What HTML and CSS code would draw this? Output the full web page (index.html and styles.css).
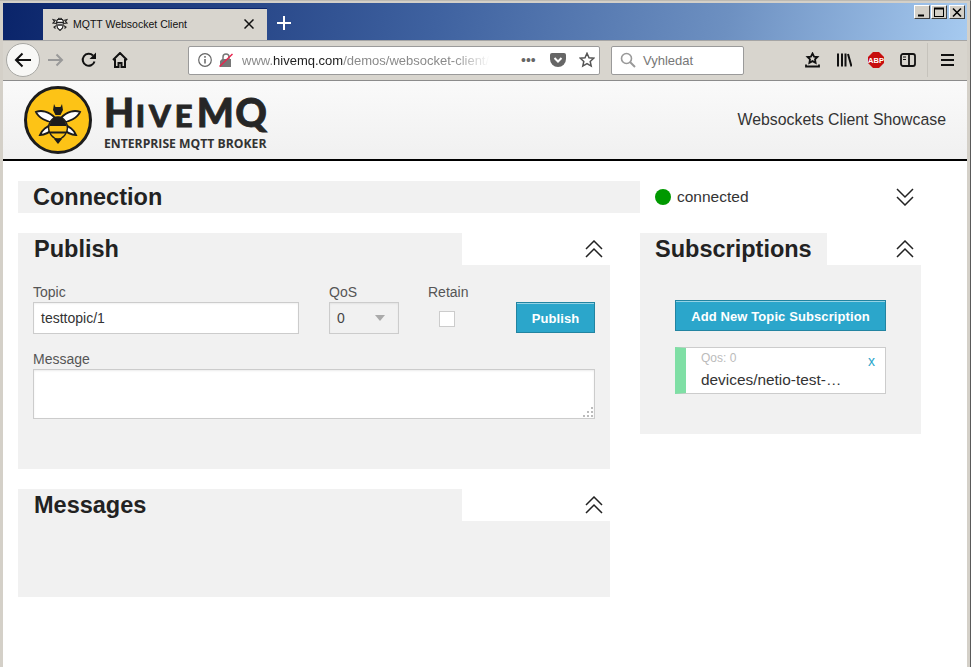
FILE: index.html
```html
<!DOCTYPE html>
<html lang="en">
<head>
<meta charset="utf-8">
<title>MQTT Websocket Client</title>
<link rel="stylesheet" href="styles.css">
</head>
<body>
<div class="window">
  <div class="titlebar">
    <div class="tab">
      <svg class="favicon" width="16" height="14" viewBox="0 0 16 14"><g fill="none" stroke="#222" stroke-width="1.100"><path d="M5.500 2.500h5l1 2.500-1 6-2.500 2.500L5.500 11l-1-6z" fill="#fff"/><path d="M5 5.500h6M5.500 8h5M6.500 1l1 1.500M9.500 1l-1 1.500" stroke-width="1.400"/><path d="M4.500 3.500L1 2.500l1.500 2L1 6l3.500.5M11.500 3.500l3.500-1-1.500 2L15 6l-3.500.5M4.500 8.500L2 10l1.500 1.500M11.500 8.500L14 10l-1.500 1.500"/></g></svg>
      <span class="tab-title">MQTT Websocket Client</span>
      <svg class="tab-close" width="10" height="10" viewBox="0 0 10 10"><path d="M.5.5l9 9M9.5.5l-9 9" stroke="#111" stroke-width="1.500"/></svg>
    </div>
    <svg class="newtab" width="14" height="14" viewBox="0 0 14 14"><path d="M7 0v14M0 7h14" stroke="#fff" stroke-width="2"/></svg>
    <div class="winbtns">
      <div class="winbtn"><svg width="16" height="13" viewBox="0 0 16 13"><path d="M4 9.500h6" stroke="#000" stroke-width="2"/></svg></div>
      <div class="winbtn"><svg width="16" height="13" viewBox="0 0 16 13"><rect x="3.500" y="2.500" width="9" height="8" fill="none" stroke="#000"/><path d="M3 2.500h10" stroke="#000" stroke-width="2"/></svg></div>
      <div class="winbtn close"><svg width="16" height="13" viewBox="0 0 16 13"><path d="M4 2.500l8 8M12 2.500l-8 8" stroke="#000" stroke-width="1.600"/></svg></div>
    </div>
  </div>
  <div class="toolbar">
    <div class="backbtn"><svg width="18" height="16" viewBox="0 0 18 16"><path d="M17 8H2M8.500 1.500L2 8l6.500 6.500" fill="none" stroke="#111" stroke-width="2"/></svg></div>
    <svg class="ic-forward" width="16" height="14" viewBox="0 0 16 14"><path d="M0 7h14M8.500 1.500L14 7l-5.500 5.500" fill="none" stroke="#999" stroke-width="2"/></svg>
    <svg class="ic-reload" width="16" height="16" viewBox="0 0 16 16"><path d="M13.500 9.500A6 6 0 1 1 12 3.500" fill="none" stroke="#111" stroke-width="2"/><path d="M15 .5v6.500H8.500z" fill="#111"/></svg>
    <svg class="ic-home" width="16" height="16" viewBox="0 0 16 16"><path d="M1 8l7-7 7 7M3 7v8h3.500v-4h3v4H13V7" fill="none" stroke="#111" stroke-width="2"/></svg>
    <div class="urlbar">
      <svg class="ic-info" width="14" height="14" viewBox="0 0 14 14"><circle cx="7" cy="7" r="6.300" fill="none" stroke="#666" stroke-width="1.200"/><path d="M7 6v4.500M7 3v1.800" stroke="#666" stroke-width="1.500"/></svg>
      <svg class="ic-lock" width="14" height="14" viewBox="0 0 14 14"><path d="M3 6h9v8H1V8z" fill="#777"/><path d="M4 6V4a3 3 0 0 1 6 0v2" fill="none" stroke="#777" stroke-width="1.500"/><path d="M.5 13.500L13.500 1" stroke="#e8264f" stroke-width="1.500"/></svg>
      <span class="url"><span class="url-dim">www.</span>hivemq.com<span class="url-dim">/demos/websocket-client/</span></span>
      <span class="dots">•••</span>
      <svg class="ic-pocket" width="16" height="14" viewBox="0 0 16 14"><path d="M0 2a2 2 0 0 1 2-2h12a2 2 0 0 1 2 2v4a8 8 0 0 1-16 0z" fill="#666"/><path d="M4.500 5L8 8.500 11.500 5" fill="none" stroke="#fff" stroke-width="2"/></svg>
      <svg class="ic-star" width="16" height="16" viewBox="0 0 16 16"><path d="M8 1.300l2 4.400 4.700.5-3.500 3.200 1 4.700L8 11.700l-4.200 2.400 1-4.700L1.300 6.200 6 5.700z" fill="none" stroke="#555" stroke-width="1.500"/></svg>
    </div>
    <div class="searchbar">
      <svg width="16" height="16" viewBox="0 0 16 16"><circle cx="6.500" cy="6.500" r="5" fill="none" stroke="#999" stroke-width="1.600"/><path d="M10 10l5 5" stroke="#999" stroke-width="2"/></svg>
      <span class="search-text">Vyhledat</span>
    </div>
    <svg class="ic-saved" width="15" height="16" viewBox="0 0 15 16"><path d="M7.500 1.500l1.600 3.100 3.400.4-2.500 2.400.6 3.400-3.100-1.700-3.100 1.700.6-3.400L2.500 5l3.400-.4z" fill="none" stroke="#111" stroke-width="1.800"/><path d="M1 12.500v2h13v-2" fill="none" stroke="#111" stroke-width="1.800"/></svg>
    <svg class="ic-lib" width="15" height="14" viewBox="0 0 15 14"><path d="M1 .5v13M5 .5v13M8.500.5v13M11 1l3.500 12.500" stroke="#111" stroke-width="2" fill="none"/></svg>
    <svg class="ic-abp" width="16" height="16" viewBox="0 0 16 16"><path d="M5 0h6l5 5v6l-5 5H5l-5-5V5z" fill="#c70d0d"/><text x="8" y="11" class="abp-text" text-anchor="middle">ABP</text></svg>
    <svg class="ic-side" width="16" height="14" viewBox="0 0 16 14"><rect x="1" y="1" width="14" height="12" rx="2" fill="none" stroke="#111" stroke-width="1.800"/><path d="M9 1v12" stroke="#111" stroke-width="1.800"/><path d="M3 4h3M3 6.500h3" stroke="#111"/></svg>
    <div class="tb-sep"></div>
    <svg class="ic-menu" width="13" height="12" viewBox="0 0 13 12"><path d="M0 1h13M0 6h13M0 11h13" stroke="#111" stroke-width="2"/></svg>
  </div>
  <div class="page">
    <header class="site-header">
      <div class="brand">
        <svg class="bee" width="70" height="70" viewBox="0 0 70 70">
          <circle cx="35" cy="35" r="32.500" fill="#fdc316" stroke="#1c1c1c" stroke-width="3"/>
          <path d="M32 33C26 26 18 25 13 27c2 5 11 11 19 10zM38 33c6-7 14-8 19-6-2 5-11 11-19 10zM29 40c-5 1-10 5-12 10 5 0 11-4 14-7zM41 40c5 1 10 5 12 10-5 0-11-4-14-7z" fill="#fff" stroke="#1c1c1c" stroke-width="2"/>
          <path d="M31 19l1.500 3h5L39 19l1 6-2.500 5h-5L30 25z" fill="#1c1c1c"/>
          <path d="M35 32c6 0 9.500 6 9.500 11S40 54 35 54s-9.500-6-9.500-11S29 32 35 32z" fill="#fdc316" stroke="#1c1c1c" stroke-width="1.500"/>
          <path d="M35 32c4 0 7.500 3 8.500 9h-17c1-6 4.500-9 8.500-9zM27 46.500h16v2H27z" fill="#1c1c1c"/>
          <path d="M31 54h8l-4 5z" fill="#1c1c1c"/>
        </svg>
        <div class="brand-text">
          <div class="brand-name"><span class="cap">H</span>IVE<span class="cap">MQ</span></div>
          <div class="brand-sub">ENTERPRISE MQTT BROKER</div>
        </div>
      </div>
      <div class="showcase">Websockets Client Showcase</div>
    </header>
    <main class="content">
      <div class="row-top">
        <div class="connection-bar"><h2>Connection</h2></div>
        <div class="status">
          <span class="dot"></span>
          <span class="status-text">connected</span>
          <svg class="chevron" width="18" height="18" viewBox="0 0 18 18"><path d="M1 1l8 8 8-8M1 9l8 8 8-8" fill="none" stroke="#222" stroke-width="1.500"/></svg>
        </div>
      </div>
      <div class="columns">
        <div class="col-left">
          <section class="section">
            <div class="sec-head">
              <div class="sec-tab wide"><h2>Publish</h2></div>
              <svg class="chevron" width="18" height="18" viewBox="0 0 18 18"><path d="M1 9l8-8 8 8M1 17l8-8 8 8" fill="none" stroke="#222" stroke-width="1.500"/></svg>
            </div>
            <div class="panel publish-panel">
              <div class="form-row">
                <div class="field f-topic">
                  <label class="lbl">Topic</label>
                  <div class="input">testtopic/1</div>
                </div>
                <div class="field f-qos">
                  <label class="lbl">QoS</label>
                  <div class="input select"><span>0</span><span class="caret"></span></div>
                </div>
                <div class="field f-retain">
                  <label class="lbl">Retain</label>
                  <div class="check"></div>
                </div>
                <button class="btn btn-publish">Publish</button>
              </div>
              <label class="lbl lbl-msg">Message</label>
              <div class="textarea">
                <svg class="grip" width="12" height="12" viewBox="0 0 12 12"><path d="M9 1h2v2H9zM5 5h2v2H5zM9 5h2v2H9zM1 9h2v2H1zM5 9h2v2H5zM9 9h2v2H9z" fill="#bbb"/></svg>
              </div>
            </div>
          </section>
          <section class="section messages">
            <div class="sec-head">
              <div class="sec-tab wide"><h2>Messages</h2></div>
              <svg class="chevron" width="18" height="18" viewBox="0 0 18 18"><path d="M1 9l8-8 8 8M1 17l8-8 8 8" fill="none" stroke="#222" stroke-width="1.500"/></svg>
            </div>
            <div class="panel messages-panel"></div>
          </section>
        </div>
        <div class="col-right">
          <section class="section">
            <div class="sec-head">
              <div class="sec-tab narrow"><h2>Subscriptions</h2></div>
              <svg class="chevron" width="18" height="18" viewBox="0 0 18 18"><path d="M1 9l8-8 8 8M1 17l8-8 8 8" fill="none" stroke="#222" stroke-width="1.500"/></svg>
            </div>
            <div class="panel subs-panel">
              <button class="btn btn-add">Add New Topic Subscription</button>
              <div class="sub-card">
                <div class="sub-body">
                  <div class="sub-qos">Qos: 0</div>
                  <div class="sub-topic">devices/netio-test-…</div>
                </div>
                <span class="sub-x">x</span>
              </div>
            </div>
          </section>
        </div>
      </div>
    </main>
  </div>
</div>
</body>
</html>
```

FILE: styles.css
```css
* { box-sizing: border-box; }
html, body { margin: 0; padding: 0; height: 100%; background: #d4d0c8; overflow: hidden; }
body { font-family: "Liberation Sans", Arial, sans-serif; color: #222; }
.window {
  width: 971px; height: 667px;
  display: flex; flex-direction: column;
  padding: 2px 3px 0 3px;
  border-top: 1px solid #bdbab3;
  border-right: 1px solid #5a5a5a;
}

.titlebar {
  height: 37px; flex: none;
  display: flex; align-items: flex-start;
  padding-left: 40px;
  background: linear-gradient(100deg, #0a246a 0%, #3f62a0 45%, #6d90c1 75%, #a6caf0 100%);
}
.tab {
  width: 224px; height: 32px; margin-top: 5px;
  background: #d8d5ce; border-top: 1px solid #0a246a;
  display: flex; align-items: center;
  padding: 0 13px 2px 9px;
}
.favicon { flex: none; }
.tab-title { font-size: 10.500px; margin-left: 5px; color: #111; flex: 1; }
.tab-close { flex: none; }
.newtab { margin: 13px 0 0 10px; }
.winbtns { margin-left: auto; display: flex; margin-top: 2px; margin-right: 2px; }
.winbtn {
  width: 16px; height: 14px; margin-left: 1px;
  background: #d4d0c8;
  border: 1px solid; border-color: #fff #404040 #404040 #fff;
  display: flex; align-items: center; justify-content: center;
}
.winbtn svg { flex: none; }
.winbtn.close { margin-left: 2px; }

.toolbar {
  height: 41px; flex: none;
  background: #d8d5ce;
  border-bottom: 1px solid #8c8c8c;
  border-top: 1px solid #a5a5a5;
  padding-bottom: 1px;
  display: flex; align-items: center;
}
.backbtn {
  width: 34px; height: 34px; margin-left: 3px; flex: none;
  border-radius: 50%; background: #f8f8f6; border: 1px solid #a8a8a4;
  display: flex; align-items: center; justify-content: center;
}
.ic-forward { margin-left: 8px; flex: none; }
.ic-reload { margin-left: 17px; flex: none; }
.ic-home { margin-left: 15px; flex: none; }
.urlbar {
  width: 412px; height: 29px; margin-left: 60px; flex: none;
  background: #fff; border: 1px solid #9a9a9a; border-radius: 2px;
  display: flex; align-items: center;
  padding-left: 9px;
  overflow: hidden;
}
.ic-info { flex: none; }
.ic-lock { margin-left: 7px; flex: none; }
.url {
  margin-left: 9px; font-size: 13px; color: #222;
  width: 248px; overflow: hidden; white-space: nowrap; flex: none;
  -webkit-mask-image: linear-gradient(to right, #000 85%, transparent 100%);
  mask-image: linear-gradient(to right, #000 85%, transparent 100%);
}
.url-dim { color: #8a8a8a; }
.dots { font-size: 14px; color: #666; margin-left: 31px; width: 18px; flex: none; }
.ic-pocket { margin-left: 11px; flex: none; }
.ic-star { margin-left: 13px; flex: none; }
.searchbar {
  width: 133px; height: 29px; margin-left: 11px; flex: none;
  background: #fff; border: 1px solid #9a9a9a; border-radius: 2px;
  display: flex; align-items: center; padding-left: 8px;
}
.search-text { font-size: 13px; color: #777; margin-left: 7px; }
.ic-saved { margin-left: 61px; flex: none; }
.ic-lib { margin-left: 17px; flex: none; }
.ic-abp { margin-left: 16px; flex: none; }
.abp-text { font: bold 7.500px "Liberation Sans", sans-serif; fill: #fff; }
.ic-side { margin-left: 16px; flex: none; }
.tb-sep { width: 1px; height: 34px; background: #c6c3bc; margin-left: 11px; flex: none; }
.ic-menu { margin-left: 13px; flex: none; }

.page { flex: 1; background: #fff; min-height: 0; overflow: hidden; }
.site-header {
  height: 80px;
  background: linear-gradient(#fafafa, #f0f0f0);
  border-bottom: 2px solid #000;
  display: flex; align-items: flex-start; justify-content: space-between;
}
.brand { display: flex; margin-left: 20px; margin-top: 4px; }
.bee { flex: none; }
.brand-text { margin-left: 11px; margin-top: 10px; }
.brand-name {
  font-family: Lato, sans-serif; font-weight: 900; font-size: 31px; line-height: 34px;
  color: #262626; letter-spacing: 4px; white-space: nowrap;
  -webkit-text-stroke: 0.800px #262626;
}
.cap { font-size: 39px; letter-spacing: 1.500px; }
.brand-sub {
  font-family: "Open Sans", sans-serif; font-weight: 700; font-size: 12.200px; line-height: 15px;
  color: #333; white-space: nowrap; margin-top: 4px;
}
.showcase { font-size: 15.850px; color: #333; margin-top: 30px; margin-right: 21px; }

.content { padding: 20px 0 0 15px; }
h2 { margin: 0; font-size: 23.500px; font-weight: bold; line-height: 32px; color: #222; }
.row-top { display: flex; }
.connection-bar { width: 622px; height: 32px; background: #f1f1f1; padding-left: 15px; }
.status { width: 281px; display: flex; align-items: center; padding: 0 7px 0 15px; }
.dot { width: 16px; height: 16px; border-radius: 50%; background: #009900; flex: none; }
.status-text { font-size: 15.500px; color: #333; margin-left: 6px; }
.status .chevron { margin-left: auto; }
.chevron { flex: none; }
.columns { display: flex; margin-top: 20px; }
.col-left { width: 622px; padding-right: 30px; flex: none; }
.col-right { width: 281px; flex: none; }
.sec-head { height: 32px; display: flex; align-items: center; justify-content: space-between; padding-right: 7px; }
.sec-tab { height: 32px; background: #f1f1f1; padding-left: 15px; }
.sec-tab.wide { width: 444px; padding-left: 16px; }
.sec-tab.narrow { width: 187px; }
.panel { background: #f1f1f1; }
.publish-panel { height: 204px; padding: 19px 15px 0 15px; }
.form-row { display: flex; align-items: flex-start; height: 50px; }
.field { display: flex; flex-direction: column; flex: none; }
.lbl { font-size: 14px; line-height: 16px; color: #555; display: block; }
.f-topic { width: 266px; }
.f-qos { width: 70px; margin-left: 30px; }
.f-retain { width: 50px; margin-left: 29px; }
.input {
  height: 32px; margin-top: 2px;
  background: #fff; border: 1px solid #ccc;
  font-size: 14px; color: #333; line-height: 30px;
  padding-left: 7px;
  box-shadow: inset 0 1px 2px rgba(0,0,0,0.06);
}
.select { background: #f1f1f1; display: flex; align-items: center; justify-content: space-between; padding: 0 13px 0 7px; color: #444; }
.caret { width: 0; height: 0; border: 5px solid transparent; border-top: 6px solid #aaa; border-bottom: 0; }
.check { width: 16px; height: 16px; background: #fff; border: 1px solid #ccc; margin: 11px 0 0 11px; }
.btn {
  font-family: "Liberation Sans", Arial, sans-serif;
  background: #2ba6cb; color: #fff; font-weight: bold;
  border: 1px solid #2284a1;
  box-shadow: inset 0 1px 0 rgba(255,255,255,0.5);
  padding: 1px 0 0; margin: 0;
}
.btn-publish { width: 79px; height: 31px; font-size: 13px; letter-spacing: 0.100px; margin-left: 38px; margin-top: 18px; flex: none; }
.lbl-msg { margin-top: 17px; }
.textarea {
  height: 50px; margin-top: 2px; width: 562px;
  background: #fff; border: 1px solid #ccc; display: flex; align-items: flex-end; justify-content: flex-end;
  box-shadow: inset 0 1px 2px rgba(0,0,0,0.08);
}
.grip { flex: none; }
.messages { margin-top: 20px; }
.messages-panel { height: 76px; }
.subs-panel { height: 169px; padding: 35px 35px 0 35px; }
.btn-add { display: block; width: 211px; height: 31px; font-size: 13px; letter-spacing: 0.100px; }
.sub-card {
  margin-top: 16px; height: 47px; width: 211px;
  background: #fff; border: 1px solid #ccc; border-left: 11px solid #7fdfa5;
  display: flex; justify-content: space-between;
}
.sub-body { padding-left: 15px; }
.sub-qos { font-size: 12px; line-height: 14px; color: #bbb; margin-top: 3px; }
.sub-topic { font-size: 15.400px; line-height: 18px; color: #333; margin-top: 6px; white-space: nowrap; }
.sub-x { font-size: 14px; line-height: 16px; color: #2ba6cb; margin: 5px 10px 0 0; }
```
